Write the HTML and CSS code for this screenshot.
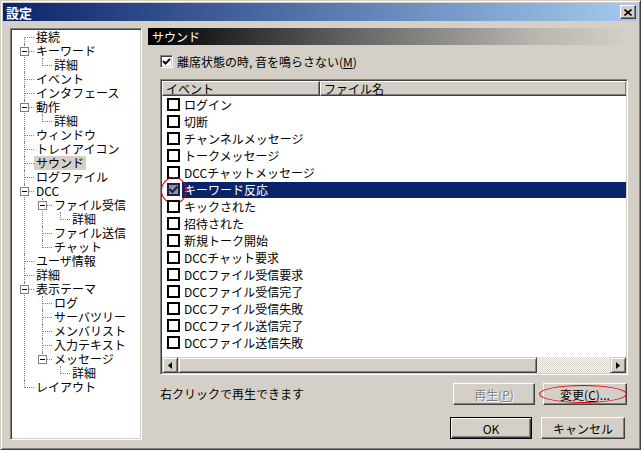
FILE: index.html
```html
<!DOCTYPE html>
<html lang="ja">
<head>
    <meta charset="UTF-8">
    <title>設定</title>
    <link rel="stylesheet" href="styles.css">
</head>
<body>
    <div class="window">
        <div class="titlebar">
            <span class="title">設定</span>
            <span class="close">
                <svg width="8" height="7" viewBox="0 0 8 7"><path d="M0.5 0.5 L7.5 6.5 M7.5 0.5 L0.5 6.5" stroke="#000" stroke-width="1.6" fill="none"/></svg>
            </span>
        </div>

        <div class="body">
            <div class="tree">
                <ul>
                    <li><span class="node">接続</span></li>
                    <li><span class="toggle"></span><span class="node">キーワード</span>
                        <ul><li><span class="node">詳細</span></li></ul>
                    </li>
                    <li><span class="node">イベント</span></li>
                    <li><span class="node">インタフェース</span></li>
                    <li><span class="toggle"></span><span class="node">動作</span>
                        <ul><li><span class="node">詳細</span></li></ul>
                    </li>
                    <li><span class="node">ウィンドウ</span></li>
                    <li><span class="node">トレイアイコン</span></li>
                    <li><span class="node selected">サウンド</span></li>
                    <li><span class="node">ログファイル</span></li>
                    <li><span class="toggle"></span><span class="node">DCC</span>
                        <ul>
                            <li><span class="toggle"></span><span class="node">ファイル受信</span>
                                <ul><li><span class="node">詳細</span></li></ul>
                            </li>
                            <li><span class="node">ファイル送信</span></li>
                            <li><span class="node">チャット</span></li>
                        </ul>
                    </li>
                    <li><span class="node">ユーザ情報</span></li>
                    <li><span class="node">詳細</span></li>
                    <li><span class="toggle"></span><span class="node">表示テーマ</span>
                        <ul>
                            <li><span class="node">ログ</span></li>
                            <li><span class="node">サーバツリー</span></li>
                            <li><span class="node">メンバリスト</span></li>
                            <li><span class="node">入力テキスト</span></li>
                            <li><span class="toggle"></span><span class="node">メッセージ</span>
                                <ul><li><span class="node">詳細</span></li></ul>
                            </li>
                        </ul>
                    </li>
                    <li><span class="node">レイアウト</span></li>
                </ul>
            </div>

            <div class="panel">
                <div class="panel-head">サウンド</div>

                <div class="check-row">
                    <span class="check">
                        <svg width="9" height="9" viewBox="0 0 9 9"><path d="M1 4 L3.5 6.5 L8 2" stroke="#000" stroke-width="2" fill="none"/></svg>
                    </span>
                    <span>離席状態の時, 音を鳴らさない(<u>M</u>)</span>
                </div>

                <div class="listview">
                    <div class="lv-header">
                        <div class="col col-event">イベント</div>
                        <div class="col col-file">ファイル名</div>
                    </div>
                    <div class="lv-body">
                        <div class="row"><span class="cb"></span><span class="label">ログイン</span></div>
                        <div class="row"><span class="cb"></span><span class="label">切断</span></div>
                        <div class="row"><span class="cb"></span><span class="label">チャンネルメッセージ</span></div>
                        <div class="row"><span class="cb"></span><span class="label">トークメッセージ</span></div>
                        <div class="row"><span class="cb"></span><span class="label">DCCチャットメッセージ</span></div>
                        <div class="row selected">
                            <span class="cb checked circled">
                                <svg width="9" height="9" viewBox="0 0 9 9"><path d="M0.5 4 L3.5 7 L8.5 1.5" stroke="#1c2240" stroke-width="2" fill="none"/></svg>
                            </span>
                            <span class="label">キーワード反応</span>
                        </div>
                        <div class="row"><span class="cb"></span><span class="label">キックされた</span></div>
                        <div class="row"><span class="cb"></span><span class="label">招待された</span></div>
                        <div class="row"><span class="cb"></span><span class="label">新規トーク開始</span></div>
                        <div class="row"><span class="cb"></span><span class="label">DCCチャット要求</span></div>
                        <div class="row"><span class="cb"></span><span class="label">DCCファイル受信要求</span></div>
                        <div class="row"><span class="cb"></span><span class="label">DCCファイル受信完了</span></div>
                        <div class="row"><span class="cb"></span><span class="label">DCCファイル受信失敗</span></div>
                        <div class="row"><span class="cb"></span><span class="label">DCCファイル送信完了</span></div>
                        <div class="row"><span class="cb"></span><span class="label">DCCファイル送信失敗</span></div>
                    </div>
                    <div class="hscroll">
                        <span class="arrow">
                            <svg width="4" height="7" viewBox="0 0 4 7"><path d="M4 0 L0 3.5 L4 7 Z" fill="#000"/></svg>
                        </span>
                        <span class="thumb"></span>
                        <span class="track"></span>
                        <span class="arrow">
                            <svg width="4" height="7" viewBox="0 0 4 7"><path d="M0 0 L4 3.5 L0 7 Z" fill="#000"/></svg>
                        </span>
                    </div>
                </div>

                <div class="hint-row">
                    <span class="hint">右クリックで再生できます</span>
                    <button class="btn" disabled>再生(<u>P</u>)</button>
                    <button class="btn btn-wide circled">変更(<u>C</u>)...</button>
                </div>

                <div class="dialog-row">
                    <button class="btn default">OK</button>
                    <button class="btn btn-wide">キャンセル</button>
                </div>
            </div>
        </div>
    </div>
</body>
</html>
```

FILE: styles.css
```css
:root {
    --face: #d4d0c8;
    --shadow: #808080;
    --dark: #404040;
    --light: #ffffff;
    --select: #0a246a;
}

* {
    box-sizing: border-box;
    margin: 0;
    padding: 0;
}

body {
    width: 641px;
    height: 450px;
    overflow: hidden;
    background: var(--face);
    color: #000;
    font-family: "Noto Sans CJK JP", "Noto Sans", sans-serif;
    font-size: 12px;
    line-height: 1;
}

.window {
    width: 641px;
    height: 450px;
    padding: 2px;
    background: var(--face);
    border: 1px solid;
    border-color: var(--face) var(--dark) var(--dark) var(--face);
    box-shadow: inset 1px 1px var(--light), inset -1px -1px var(--shadow);
    display: flex;
    flex-direction: column;
}

.titlebar {
    height: 18px;
    padding: 0 2px 0 3px;
    display: flex;
    align-items: center;
    justify-content: space-between;
    background: linear-gradient(to right, #0a246a, #a6caf0);
    color: #fff;
    font-weight: bold;
    font-size: 13px;
}

.close {
    width: 16px;
    height: 14px;
    display: flex;
    align-items: center;
    justify-content: center;
    background: var(--face);
    border: 1px solid;
    border-color: var(--light) var(--dark) var(--dark) var(--light);
    box-shadow: inset -1px -1px var(--shadow);
}

.body {
    display: flex;
    gap: 6px;
    padding: 7px 10px 0 7px;
}

/* tree */

.tree {
    width: 132px;
    height: 412px;
    padding: 1px;
    background: #fff;
    border: 1px solid;
    border-color: var(--shadow) var(--light) var(--light) var(--shadow);
    box-shadow: inset 1px 1px var(--dark), inset -1px -1px var(--face);
}

.tree ul {
    list-style: none;
    padding-left: 6px;
}

.tree > ul {
    padding-left: 12px;
}

.tree li {
    position: relative;
    padding-left: 12px;
}

.tree li::before {
    content: "";
    position: absolute;
    left: 0;
    top: 7px;
    width: 10px;
    border-top: 1px dotted var(--shadow);
}

.tree li::after {
    content: "";
    position: absolute;
    left: 0;
    top: 0;
    bottom: 0;
    border-left: 1px dotted var(--shadow);
}

.tree li:last-child::after {
    bottom: auto;
    height: 8px;
}

.tree > ul > li:first-child::after {
    top: 7px;
}

.node {
    display: block;
    width: max-content;
    height: 14px;
    line-height: 14px;
    padding: 0 2px;
    margin-left: -2px;
}

.node.selected {
    background: var(--face);
}

.toggle {
    position: absolute;
    left: -4px;
    top: 3px;
    width: 9px;
    height: 9px;
    background: #fff;
    border: 1px solid var(--shadow);
    z-index: 1;
}

.toggle::before {
    content: "";
    position: absolute;
    left: 1px;
    top: 3px;
    width: 5px;
    height: 1px;
    background: #000;
}

/* right panel */

.panel {
    width: 480px;
    display: flex;
    flex-direction: column;
}

.panel-head {
    height: 17px;
    line-height: 17px;
    padding-left: 4px;
    color: #fff;
    background: linear-gradient(to right, #000 0%, #6a6a6a 45%, #b8b4ae 80%, var(--face) 100%);
}

.check-row {
    margin: 10px 0 0 12px;
    height: 13px;
    display: flex;
    align-items: center;
    gap: 4px;
}

.check {
    width: 13px;
    height: 13px;
    display: flex;
    align-items: center;
    justify-content: center;
    background: #fff;
    border: 1px solid;
    border-color: var(--shadow) var(--light) var(--light) var(--shadow);
    box-shadow: inset 1px 1px var(--dark), inset -1px -1px var(--face);
}

.listview {
    margin: 11px 0 0 12px;
    width: 468px;
    height: 296px;
    padding: 1px;
    display: flex;
    flex-direction: column;
    background: #fff;
    border: 1px solid;
    border-color: var(--shadow) var(--light) var(--light) var(--shadow);
    box-shadow: inset 1px 1px var(--dark), inset -1px -1px var(--face);
}

.lv-header {
    display: flex;
    height: 15px;
}

.col {
    height: 15px;
    line-height: 13px;
    padding-left: 3px;
    background: var(--face);
    border: 1px solid;
    border-color: var(--light) var(--dark) var(--dark) var(--light);
    box-shadow: inset -1px -1px var(--shadow);
}

.col-event {
    width: 158px;
}

.col-file {
    flex: 1;
    border-right: none;
}

.lv-body {
    flex: 1;
    background: #fff;
}

.row {
    display: flex;
    align-items: center;
    height: 17px;
    padding-left: 5px;
}

.cb {
    position: relative;
    width: 13px;
    height: 13px;
    flex: none;
    display: flex;
    align-items: center;
    justify-content: center;
    background: #fff;
    border: 2px solid #000;
}

.cb.checked {
    background: #8a92b4;
    border-color: #1c2240;
}

.cb.circled::after {
    content: "";
    position: absolute;
    left: -8px;
    top: -8px;
    width: 24px;
    height: 25px;
    border: 1px solid #e00000;
    border-radius: 50%;
}

.label {
    flex: 1;
    height: 16px;
    line-height: 16px;
    margin-left: 2px;
    padding-left: 2px;
}

.row.selected .label {
    background: var(--select);
    color: #fff;
}

.hscroll {
    display: flex;
    height: 16px;
}

.arrow,
.thumb {
    background: var(--face);
    border: 1px solid;
    border-color: var(--face) var(--dark) var(--dark) var(--face);
    box-shadow: inset 1px 1px var(--light), inset -1px -1px var(--shadow);
}

.arrow {
    width: 16px;
    display: flex;
    align-items: center;
    justify-content: center;
}

.thumb {
    flex: 0 0 359px;
}

.track {
    flex: 1;
    background: repeating-conic-gradient(#fff 0 25%, var(--face) 0 50%) 0 0 / 2px 2px;
}

/* buttons */

.hint-row {
    margin: 8px 1px 0 12px;
    height: 22px;
    display: flex;
    align-items: center;
    gap: 8px;
}

.hint {
    flex: 1;
}

.dialog-row {
    margin: 12px 3px 0 0;
    display: flex;
    justify-content: flex-end;
    gap: 9px;
}

.btn {
    position: relative;
    width: 82px;
    height: 22px;
    font-family: inherit;
    font-size: 12px;
    color: #000;
    background: var(--face);
    border: 1px solid;
    border-color: var(--light) var(--dark) var(--dark) var(--light);
    box-shadow: inset -1px -1px var(--shadow);
}

.btn-wide {
    width: 84px;
}

.btn:disabled {
    color: var(--shadow);
    text-shadow: 1px 1px #fff;
}

.btn.default {
    border-color: #000;
    box-shadow: inset 1px 1px var(--light), inset -1px -1px var(--dark), inset -2px -2px var(--shadow);
}

.btn.circled::after {
    content: "";
    position: absolute;
    left: -5px;
    right: -1px;
    top: 1px;
    bottom: 1px;
    border: 1px solid #e00000;
    border-radius: 50%;
}
```
